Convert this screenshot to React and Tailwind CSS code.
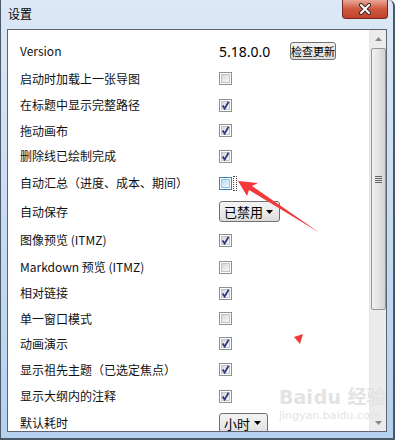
const rows = [
  { label: 'Version', h: 28, kind: 'version' },
  { label: '启动时加载上一张导图', h: 27, kind: 'off' },
  { label: '在标题中显示完整路径', h: 26, kind: 'on' },
  { label: '拖动画布', h: 25, kind: 'on' },
  { label: '删除线已绘制完成', h: 26, kind: 'on' },
  { label: '自动汇总（进度、成本、期间）', h: 28, kind: 'focus' },
  { label: '自动保存', h: 29, kind: 'combo', value: '已禁用', w: 'w-[61px]' },
  { label: '图像预览 (ITMZ)', h: 28, kind: 'on' },
  { label: 'Markdown 预览 (ITMZ)', h: 26, kind: 'off' },
  { label: '相对链接', h: 26, kind: 'on' },
  { label: '单一窗口模式', h: 25, kind: 'off' },
  { label: '动画演示', h: 25, kind: 'on' },
  { label: '显示祖先主题（已选定焦点）', h: 27, kind: 'on' },
  { label: '显示大纲内的注释', h: 26, kind: 'on' },
  { label: '默认耗时', h: 28, kind: 'combo', value: '小时', w: 'w-[49px]' },
]

function Check({ on, focus }) {
  return (
    <span className={`relative flex h-[13px] w-[13px] shrink-0 items-center justify-center border bg-white ${focus ? 'border-[#3c7fb1]' : 'border-[#8e8f8f]'}`}>
      <span className={`h-[9px] w-[9px] border ${focus ? 'border-[#8cc6ec] bg-gradient-to-br from-[#b9dff7] to-[#eaf6fd]' : 'border-[#c4c4c4] bg-gradient-to-br from-[#d6d6d6] to-[#fafafa]'}`} />
      {on && (
        <svg className="absolute left-0 top-0" width="11" height="11" viewBox="0 0 11 11">
          <path d="M2.6 5.6 L4.6 8.6 L8.6 1.8" fill="none" stroke="#2b3785" strokeWidth="1.8" />
        </svg>
      )}
    </span>
  )
}

function Combo({ value, w }) {
  return (
    <div className={`flex h-[21px] ${w} items-center justify-between rounded-[3px] border border-[#707070] bg-gradient-to-b from-[#f3f3f3] via-[#ebebeb] to-[#dcdcdc] pl-[4px] pr-[6px] text-[13px] leading-none text-black`}>
      <span>{value}</span>
      <svg width="7" height="4" viewBox="0 0 7 4"><path d="M0 0 H7 L3.5 4 Z" fill="#000" /></svg>
    </div>
  )
}

function Control({ row }) {
  if (row.kind === 'version') {
    return (
      <div className="flex items-center">
        <span className="w-[71px] font-['Noto_Sans',sans-serif] text-[14px] text-black">5.18.0.0</span>
        <button className="flex h-[18px] w-[46px] items-center justify-center rounded-[3px] border border-[#707070] bg-gradient-to-b from-[#f2f2f2] to-[#dcdcdc] text-[11px] leading-none text-black">检查更新</button>
      </div>
    )
  }
  if (row.kind === 'combo') return <Combo value={row.value} w={row.w} />
  return (
    <div className="flex items-center">
      <Check on={row.kind === 'on'} focus={row.kind === 'focus'} />
      {row.kind === 'focus' && <span className="ml-[1px] h-[15px] w-[4px] border border-dotted border-[#444]" />}
    </div>
  )
}

export default function App() {
  return (
    <div className="relative h-[440px] w-[395px] overflow-hidden rounded-tr-[6px] border-b-2 border-l border-r-2 border-[#4a5868] bg-gradient-to-b from-[#dce8f5] via-[#c8dcf1] to-[#b5d1ef] font-['Noto_Sans','Noto_Sans_CJK_SC',sans-serif]">
      {/* title bar */}
      <div className="flex h-[29px] items-start justify-between">
        <span className="pl-[7px] pt-[5px] font-['Noto_Sans_CJK_SC',sans-serif] text-[12px] text-black">设置</span>
        <div className="mr-[5px] flex h-[19px] w-[46px] items-center justify-center rounded-b-[4px] border border-t-0 border-[#6e2a22] bg-gradient-to-b from-[#e9a797] via-[#cf5840] to-[#c2432b]">
          <svg width="14" height="12" viewBox="0 0 14 12">
            <path d="M3 2 L11 10 M11 2 L3 10" stroke="#3b2a28" strokeWidth="4" strokeLinecap="round" />
            <path d="M3 2 L11 10 M11 2 L3 10" stroke="#fff" strokeWidth="2" strokeLinecap="round" />
          </svg>
        </div>
      </div>

      {/* panel */}
      <div className="mx-[6px] flex h-[403px] border border-[#5d6570] bg-white">
        <div className="flex-1 overflow-hidden pl-[12px] pt-[7px] font-['Noto_Sans_CJK_SC',sans-serif] text-[12px] text-[#111]">
          {rows.map((r) => (
            <div key={r.label} className="flex items-center" style={{ height: r.h }}>
              <span className="w-[199px] shrink-0 whitespace-nowrap">{r.label}</span>
              <Control row={r} />
            </div>
          ))}
        </div>

        {/* scrollbar */}
        <div className="flex w-[17px] flex-col items-center border-l border-[#e6e6e6] bg-[#ececec]">
          <div className="flex h-[17px] items-center justify-center">
            <svg width="7" height="4" viewBox="0 0 7 4"><path d="M0 4 H7 L3.5 0 Z" fill="#888" /></svg>
          </div>
          <div className="mt-[1px] flex h-[262px] w-[15px] items-center justify-center rounded-[2px] border border-[#979797] bg-gradient-to-r from-[#f1f1f1] via-[#e4e4e4] to-[#d2d2d2]">
            <div className="flex flex-col gap-[1px]">
              <span className="h-[1px] w-[7px] bg-[#666]" />
              <span className="h-[1px] w-[7px] bg-[#666]" />
              <span className="h-[1px] w-[7px] bg-[#666]" />
              <span className="h-[1px] w-[7px] bg-[#666]" />
            </div>
          </div>
          <div className="flex-1" />
          <div className="flex h-[17px] items-center justify-center">
            <svg width="7" height="4" viewBox="0 0 7 4"><path d="M0 0 H7 L3.5 4 Z" fill="#888" /></svg>
          </div>
        </div>
      </div>

      {/* baidu watermark */}
      <div className="pointer-events-none absolute left-[278px] top-[388px] flex flex-col items-start whitespace-nowrap leading-none text-[#e3e3e3]">
        <span className="font-['DejaVu_Sans','Noto_Sans_CJK_SC',sans-serif] text-[19px] font-bold">Bai<span className="ml-[1px]">du</span> 经验</span>
        <span className="mt-[3px] font-['DejaVu_Sans',sans-serif] text-[11px]">jingyan.baidu.com</span>
      </div>

      {/* annotation arrows */}
      <svg className="pointer-events-none absolute left-0 top-0" width="395" height="440">
        <path d="M237 181 L257 183 L251 186 L319 233 L248 190 L246 196 Z" fill="#f33a3a" />
        <path d="M293 337 L302 334 L299 344 Z" fill="#f33a3a" />
      </svg>
    </div>
  )
}
